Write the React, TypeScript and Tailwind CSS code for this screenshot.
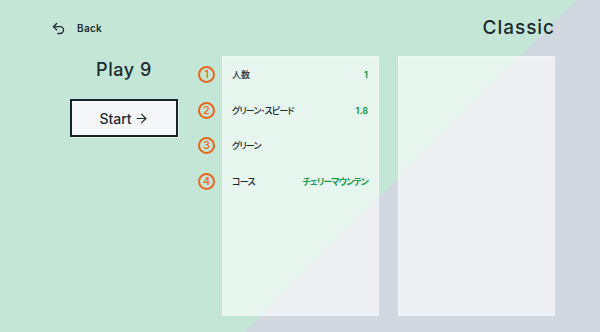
import { Undo2, ArrowRight } from "lucide-react";

const rows = [
  { n: "1", label: "人数", value: "1" },
  { n: "2", label: "グリーン･スピード", value: "1.8" },
  { n: "3", label: "グリーン", value: "" },
  { n: "4", label: "コース", value: "チェリーマウンテン" },
];

const font = "font-['Inter','Noto_Sans_CJK_JP',sans-serif]";
const isKana = (s: string) => /[\u30a0-\u30ff\uff60-\uff9f]/.test(s);

export default function App() {
  return (
    <div
      className={`w-[600px] h-[332px] overflow-hidden text-[#1c2a31] ${font} bg-[linear-gradient(135deg,#c4e6d7_408px,#d1d8e0_408px)] flex flex-col`}
    >
      <header className="flex items-center justify-between h-[56px] pl-[51px] pr-[45px] pt-[1px]">
        <button className="flex items-center gap-[11px] text-[10px] font-semibold tracking-[0.03em]">
          <Undo2 size={15} strokeWidth={2.2} />
          Back
        </button>
        <h1 className="text-[19px] font-[460] tracking-[0.05em]">Classic</h1>
      </header>

      <div className="flex">
        <div className="w-[108px] ml-[70px] flex flex-col items-center">
          <h2 className="text-[18px] font-[460] tracking-[0.03em] mt-[2px] leading-[24px]">Play 9</h2>
          <button className="mt-[17px] w-[108px] h-[38px] border-2 border-[#17252b] bg-[#f5f7f8] shadow-[1px_1px_0_#eaf5ef] flex items-center justify-center gap-[2px] text-[14px] font-[460]">
            Start
            <ArrowRight size={15} strokeWidth={1.8} />
          </button>
        </div>

        <div className="ml-[20px] w-[24px] flex flex-col pt-[1px]">
          {rows.map((r) => (
            <div key={r.n} className="h-[35.5px] flex items-center">
              <span className="w-[17px] h-[17px] rounded-full border-2 border-[#e8661d] text-[#e8661d] text-[11px] font-medium leading-none flex items-center justify-center">
                {r.n}
              </span>
            </div>
          ))}
        </div>

        <section className="w-[157px] h-[260px] bg-white/60 border border-white/30 pl-[9px] pr-[10px]">
          {rows.map((r) => (
            <div
              key={r.label}
              className="h-[35.5px] flex items-center justify-between text-[9px] font-medium [font-feature-settings:'palt']"
            >
              <span className={isKana(r.label) ? "tracking-[-0.09em]" : ""}>{r.label}</span>
              <span className={`font-bold text-[#1d9a4c] ${isKana(r.value) ? "tracking-[-0.11em]" : ""}`}>
                {r.value}
              </span>
            </div>
          ))}
        </section>

        <section className="ml-[19px] w-[157px] h-[260px] bg-white/60 border border-white/30" />
      </div>
    </div>
  );
}
